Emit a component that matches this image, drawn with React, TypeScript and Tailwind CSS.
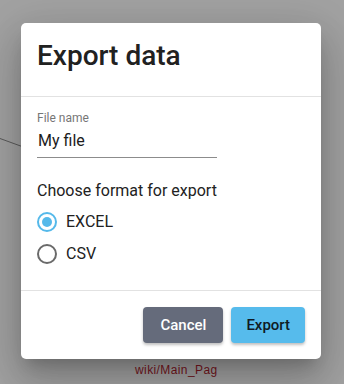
import React from 'react';

export default function App() {
  return (
    <div className="relative w-[344px] h-[384px] overflow-hidden bg-[#a2a2a2] font-['Roboto',sans-serif]">
      {/* stray connector line behind the overlay */}
      <svg className="absolute left-0 top-0" width="40" height="200">
        <line x1="0" y1="138.5" x2="22" y2="146.5" stroke="#5a5a5a" strokeWidth="1" />
      </svg>

      <div className="relative flex flex-col items-start pt-[23px] pl-[21px]">
        <div className="w-[300px] bg-white rounded-[5px] shadow-[0_11px_15px_-7px_rgba(0,0,0,0.2),0_24px_38px_3px_rgba(0,0,0,0.14),0_9px_46px_8px_rgba(0,0,0,0.12)]">
          <div className="h-[74px] px-4 pt-4 border-b border-[#e2e2e2]">
            <h2 className="text-[28px] leading-[34px] font-medium text-[#212121]">Export data</h2>
          </div>

          <div className="px-4 pt-[13px] h-[194px] border-b border-[#e2e2e2]">
            <label className="block text-[12px] leading-4 text-[#767676]">File name</label>
            <div className="w-[180px] border-b border-[#8c8c8c] pt-[4px] pb-[5px]">
              <span className="block text-[16px] leading-[22px] text-[#1c1c1c] pl-[1px]">My file</span>
            </div>

            <p className="mt-[22px] text-[16px] leading-[22px] text-[#222]">Choose format for export</p>

            <div className="mt-[10px] flex flex-col gap-3">
              <div className="flex items-center gap-[9px]">
                <span className="w-5 h-5 rounded-full border-2 border-[#55b9ea] flex items-center justify-center">
                  <span className="w-[10px] h-[10px] rounded-full bg-[#55b9ea]" />
                </span>
                <span className="text-[16px] leading-5 text-[#212121]">EXCEL</span>
              </div>
              <div className="flex items-center gap-[9px]">
                <span className="w-5 h-5 rounded-full border-2 border-[#6a6a6a]" />
                <span className="text-[16px] leading-5 text-[#212121]">CSV</span>
              </div>
            </div>
          </div>

          <div className="h-[68px] px-4 flex items-center justify-end gap-2">
            <button className="h-9 px-[17px] rounded-[4px] bg-[#656b7b] text-white text-[15px] font-medium shadow-[0_2px_3px_rgba(0,0,0,0.25)]">
              Cancel
            </button>
            <button className="h-9 px-[15px] rounded-[4px] bg-[#56bbec] text-[#0f1a24] text-[15px] font-medium shadow-[0_2px_3px_rgba(0,0,0,0.25)]">
              Export
            </button>
          </div>
        </div>

        <div className="w-[300px] pt-[3px] pl-[114px] font-['Liberation_Sans',sans-serif] text-[12px] leading-[16px] tracking-[0.4px] text-[#5c1016]">
          wiki/Main_Pag
        </div>
      </div>
    </div>
  );
}
